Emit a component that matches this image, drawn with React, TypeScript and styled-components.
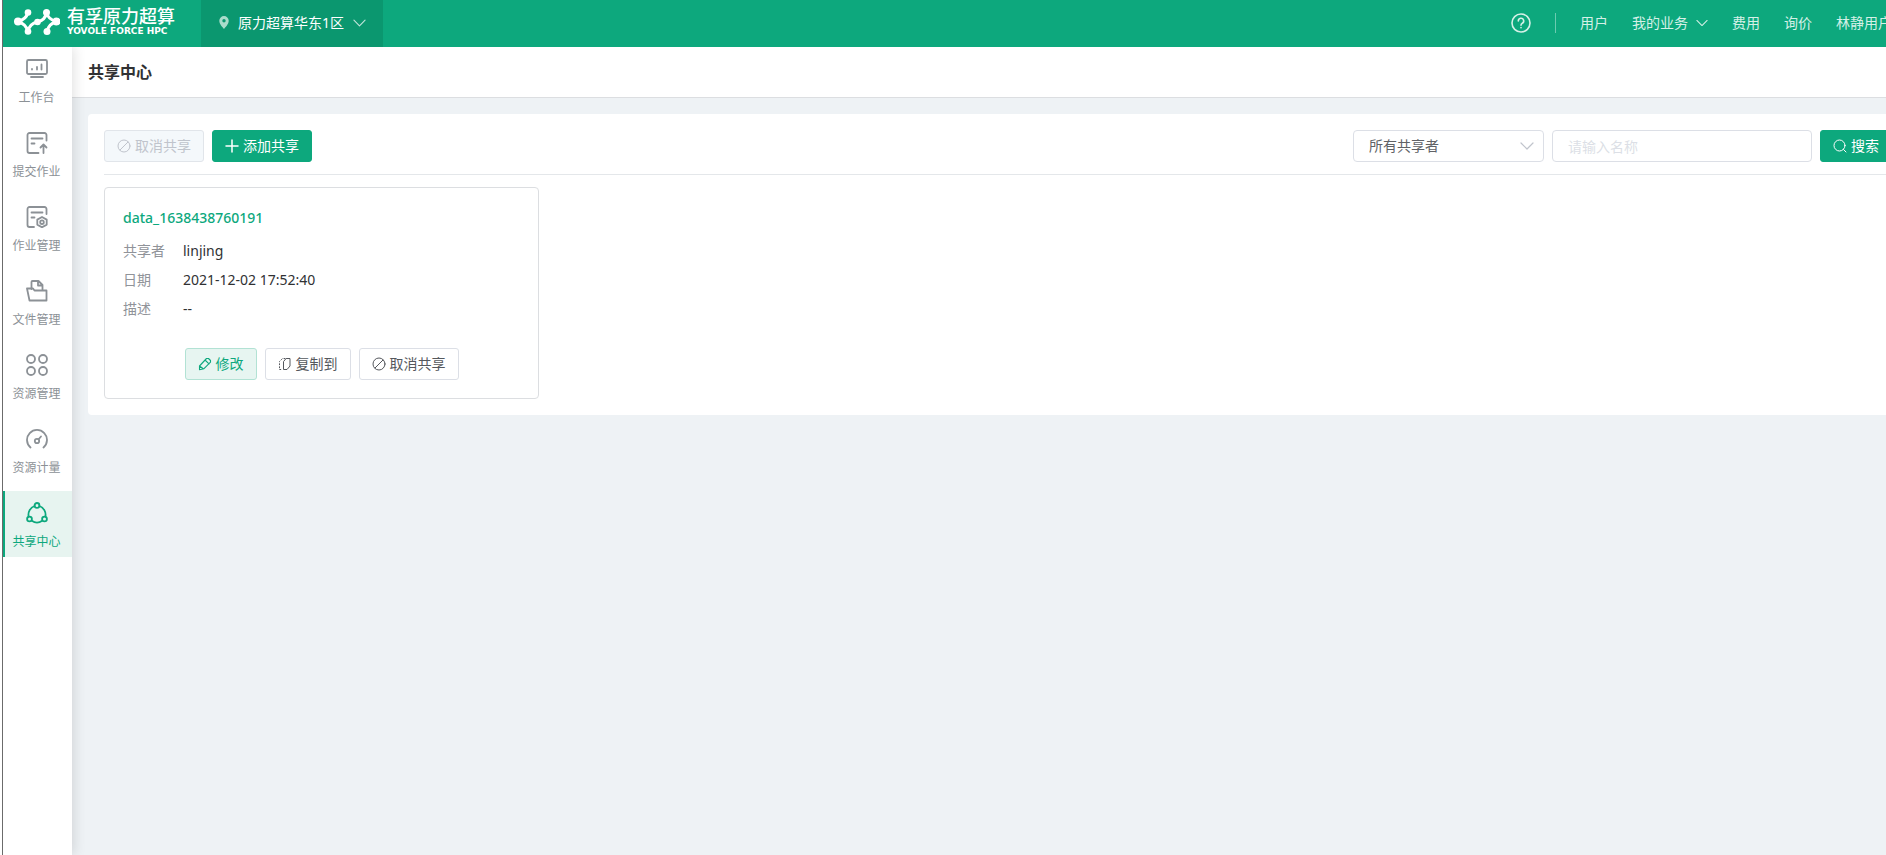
import React from 'react';
import styled, { createGlobalStyle, css } from 'styled-components';

const GlobalStyle = createGlobalStyle`
  *, *::before, *::after { box-sizing: border-box; }
  html, body, #root { height: 100%; }
  body {
    margin: 0;
    overflow: hidden;
    background: #fff;
    color: #303133;
    font-family: "Noto Sans", "Noto Sans CJK SC", sans-serif;
    font-size: 14px;
    line-height: 20px;
  }
  button, input, select { font: inherit; }
  a { color: inherit; text-decoration: none; }
  svg { display: block; flex: none; }
`;

const green = '#0da87d';
const line = '#dcdfe6';

/* The console is a little wider than the window, its right edge runs out of view. */
const Page = styled.div`
  display: flex;
  flex-direction: column;
  width: calc(100% + 36px);
  min-height: 100vh;
  margin-left: 2px;
  border-left: 1px solid #6b6b6b;
`;

const Header = styled.header`
  display: flex;
  align-items: stretch;
  height: 47px;
  background: ${green};
  color: #fff;
`;

const Brand = styled.a`
  display: flex;
  align-items: center;
  gap: 7px;
  width: 198px;
  padding: 0 0 3px 11px;
`;

const BrandText = styled.span`
  display: flex;
  flex-direction: column;
`;

const BrandName = styled.span`
  font-size: 18px;
  line-height: 18px;
  font-weight: 500;
`;

const BrandSub = styled.span`
  font-family: "DejaVu Sans", sans-serif;
  font-size: 9px;
  line-height: 12px;
  font-weight: 700;
  white-space: nowrap;
`;

const Region = styled.button`
  display: flex;
  align-items: center;
  gap: 9px;
  padding: 0 17px 2px 18px;
  border: 0;
  background: #0b976f;
  color: #fff;
  line-height: 20px;
  & > svg:last-child { opacity: 0.75; }
`;

const Nav = styled.nav`
  display: flex;
  align-items: center;
  gap: 24px;
  margin-left: auto;
  padding: 0 12px 2px 0;
  color: #d5f0e7;
`;

const NavLink = styled.a`
  display: flex;
  align-items: center;
  gap: 8px;
  white-space: nowrap;
`;

const NavDivider = styled.span`
  width: 1px;
  height: 20px;
  background: #6ccbb0;
`;

const Body = styled.div`
  display: flex;
  flex: 1;
`;

const Sidebar = styled.nav`
  display: flex;
  flex-direction: column;
  gap: 8px;
  width: 69px;
  flex: none;
  background: #fff;
  box-shadow: 2px 0 12px rgba(0, 0, 0, 0.12);
  clip-path: inset(0 -16px 0 0);
  z-index: 1;
`;

const SideItem = styled.a<{ $active?: boolean }>`
  display: flex;
  flex-direction: column;
  align-items: center;
  gap: 8px;
  height: 66px;
  padding: 11px 4px 0 0;
  border-left: 2px solid transparent;
  color: #8c9196;
  font-size: 12px;
  line-height: 20px;
  ${(p) =>
    p.$active &&
    css`
      border-left-color: ${green};
      background: #e7f4f0;
      color: ${green};
    `}
`;

const Main = styled.main`
  flex: 1;
  background: #eef2f5;
`;

const TitleBar = styled.div`
  display: flex;
  align-items: center;
  height: 51px;
  padding: 0 16px;
  border-bottom: 1px solid #dcdee1;
  background: #fff;
`;

const Title = styled.h1`
  margin: 0;
  font-size: 16px;
  line-height: 24px;
  font-weight: 600;
`;

const Panel = styled.section`
  margin: 16px;
  padding: 16px;
  border-radius: 4px;
  background: #fff;
`;

const Toolbar = styled.div`
  display: flex;
  gap: 8px;
  padding-bottom: 12px;
  border-bottom: 1px solid #e4e7ea;
`;

const Filters = styled.form`
  display: flex;
  gap: 8px;
  margin-left: auto;
`;

type Tone = 'plain' | 'primary' | 'soft';

const tones = {
  plain: css`
    border-color: ${line};
    background: #fff;
    color: #55585d;
  `,
  primary: css`
    border-color: ${green};
    background: ${green};
    color: #fff;
  `,
  soft: css`
    border-color: #b2e2d4;
    background: #e7f5f1;
    color: ${green};
  `,
};

const Button = styled.button<{ $tone?: Tone }>`
  display: flex;
  align-items: center;
  justify-content: center;
  gap: 4px;
  height: 32px;
  padding: 0 12px;
  border: 1px solid;
  border-radius: 3px;
  white-space: nowrap;
  ${(p) => tones[p.$tone ?? 'plain']}
  &:disabled {
    border-color: #e1e5ea;
    background: #f4f8fb;
    color: #c0c4cc;
  }
`;

const SelectBox = styled.label`
  display: grid;
  align-items: center;
  width: 191px;
  & > * { grid-area: 1 / 1; }
  & > svg { justify-self: end; margin-right: 10px; pointer-events: none; color: #c0c4cc; }
`;

const Select = styled.select`
  appearance: none;
  width: 100%;
  height: 32px;
  padding: 0 30px 0 15px;
  border: 1px solid ${line};
  border-radius: 4px;
  background: #fff;
  color: #606266;
`;

const Input = styled.input`
  width: 260px;
  height: 32px;
  padding: 0 15px;
  border: 1px solid ${line};
  border-radius: 4px;
  color: #606266;
  &::placeholder { color: #dcdfe6; opacity: 1; }
`;

const Cards = styled.div`
  display: grid;
  grid-template-columns: repeat(auto-fill, 435px);
  gap: 16px;
  padding-top: 12px;
`;

const Card = styled.article`
  padding: 18px;
  border: 1px solid #dcdee1;
  border-radius: 4px;
`;

const CardTitle = styled.h2`
  margin: 0 0 6px;
  font-size: 14px;
  line-height: 24px;
  font-weight: 500;
  color: ${green};
`;

const Fields = styled.dl`
  display: grid;
  grid-template-columns: 60px 1fr;
  margin: 0 0 25px;
  line-height: 29px;
`;

const Label = styled.dt`
  color: #909399;
`;

const Value = styled.dd`
  margin: 0;
`;

const Actions = styled.div`
  display: flex;
  justify-content: center;
  gap: 8px;
`;

type IconProps = { w: number; h?: number; box?: string; sw?: number; children: React.ReactNode };

const Icon = ({ w, h = w, box, sw = 1, children }: IconProps) => (
  <svg
    width={w}
    height={h}
    viewBox={box ?? `0 0 ${w} ${h}`}
    fill="none"
    stroke="currentColor"
    strokeWidth={sw}
    strokeLinecap="round"
    strokeLinejoin="round"
    aria-hidden="true"
  >
    {children}
  </svg>
);

const Chevron = ({ w }: { w: number }) => (
  <Icon w={w} h={8} box="0 0 14 8" sw={1.2}>
    <path d="M1 1l6 6 6-6" />
  </Icon>
);

const Logo = () => (
  <svg width="46" height="28" viewBox="0 0 46 28" fill="#fff" stroke="#fff" aria-hidden="true">
    <circle cx="14" cy="4.500" r="3.300" stroke="none" />
    <circle cx="4" cy="13.500" r="4" stroke="none" />
    <circle cx="14" cy="23.500" r="3.300" stroke="none" />
    <circle cx="32.500" cy="4.500" r="3.500" stroke="none" />
    <circle cx="42.500" cy="13.500" r="4" stroke="none" />
    <circle cx="33" cy="23.500" r="3.500" stroke="none" />
    <circle cx="23.500" cy="14" r="3.300" stroke="none" />
    <path
      d="M14 4.500Q12 11.500 4 13.500Q12 16 14 23.500M32.500 4.500Q34 11.500 42.500 13.500Q34.500 16 33 23.500M14 23.500Q15.500 15.500 23.500 14Q31.500 12 32.500 4.500"
      fill="none"
      strokeWidth="3"
    />
  </svg>
);

const Ban = () => (
  <Icon w={14}>
    <circle cx="7" cy="7" r="6" />
    <path d="M3 11l8-8" />
  </Icon>
);

const sideItems = [
  {
    label: '工作台',
    icon: (
      <>
        <rect x="1" y="2" width="20" height="14" rx="1.500" />
        <path d="M5 19h12M6 11v.500M11 9v2.500M15.500 6.500v5" />
      </>
    ),
  },
  {
    label: '提交作业',
    icon: (
      <path d="M20.500 8.500V3a2 2 0 0 0-2-2h-15a2 2 0 0 0-2 2v16a2 2 0 0 0 2 2h9M5.500 6.500h11M5.500 11.500h3M17.500 21v-8M14.500 15.500l3-3 3 3" />
    ),
  },
  {
    label: '作业管理',
    icon: (
      <>
        <path d="M20.500 8V3a2 2 0 0 0-2-2h-15a2 2 0 0 0-2 2v16a2 2 0 0 0 2 2H8M5.500 6.500h11M5.500 11.500h3" />
        <path d="M16 11l4.700 2.600v5L16 21.300l-4.700-2.700v-5z" />
        <circle cx="16" cy="16.200" r="1.800" />
      </>
    ),
  },
  {
    label: '文件管理',
    icon: (
      <>
        <path d="M5.500 9V2a1 1 0 0 1 1-1h6l4 4v4.500M12 1v4.500h4.500" />
        <path d="M3.500 20.500L1 8.500h6l1.500 2h12v10z" />
      </>
    ),
  },
  {
    label: '资源管理',
    icon: (
      <>
        <circle cx="5" cy="5" r="4" />
        <circle cx="17" cy="5" r="4" />
        <circle cx="5" cy="17" r="4" />
        <circle cx="17" cy="17" r="4" />
      </>
    ),
  },
  {
    label: '资源计量',
    icon: (
      <>
        <path d="M4.500 19.500a10 10 0 1 1 13 0" />
        <circle cx="11" cy="13" r="2.200" />
        <path d="M12.500 11.300L15 8.500" />
      </>
    ),
  },
  {
    label: '共享中心',
    active: true,
    icon: (
      <>
        <circle cx="11" cy="3.400" r="2.400" />
        <circle cx="3.500" cy="17" r="2.400" />
        <circle cx="18.500" cy="17" r="2.400" />
        <path d="M8.600 4A9.300 9.300 0 0 0 2.600 14.500M13.400 4a9.300 9.300 0 0 1 6 10.500M5.800 18.800a9.300 9.300 0 0 0 10.400 0" />
      </>
    ),
  },
];

const fields = [
  ['共享者', 'linjing'],
  ['日期', '2021-12-02 17:52:40'],
  ['描述', '--'],
];

export default function App() {
  return (
    <>
      <GlobalStyle />
      <Page>
        <Header>
          <Brand href="#">
            <Logo />
            <BrandText>
              <BrandName>有孚原力超算</BrandName>
              <BrandSub>YOVOLE FORCE HPC</BrandSub>
            </BrandText>
          </Brand>
          <Region type="button">
            <svg width="10" height="13" viewBox="0 0 10 13" fill="#a9dccb" aria-hidden="true">
              <path
                fillRule="evenodd"
                d="M5 0a4.700 4.700 0 0 1 4.700 4.700C9.700 8 6.500 11 5 13C3.500 11 .3 8 .3 4.700A4.700 4.700 0 0 1 5 0zM5 3a1.700 1.700 0 1 0 0 3.400A1.700 1.700 0 0 0 5 3z"
              />
            </svg>
            原力超算华东1区
            <Chevron w={13} />
          </Region>
          <Nav>
            <NavLink href="#" aria-label="帮助">
              <Icon w={20} sw={1.6}>
                <circle cx="10" cy="10" r="9" />
                <path d="M7.300 8a2.700 2.700 0 1 1 4 2.300c-.9.500-1.300.9-1.300 1.900M10 14.600v.1" />
              </Icon>
            </NavLink>
            <NavDivider />
            <NavLink href="#">用户</NavLink>
            <NavLink href="#">
              我的业务
              <Chevron w={12} />
            </NavLink>
            <NavLink href="#">费用</NavLink>
            <NavLink href="#">询价</NavLink>
            <NavLink href="#">
              林静用户
              <Chevron w={12} />
            </NavLink>
          </Nav>
        </Header>
        <Body>
          <Sidebar>
            {sideItems.map((item) => (
              <SideItem key={item.label} href="#" $active={item.active}>
                <Icon w={22} sw={1.8}>
                  {item.icon}
                </Icon>
                {item.label}
              </SideItem>
            ))}
          </Sidebar>
          <Main>
            <TitleBar>
              <Title>共享中心</Title>
            </TitleBar>
            <Panel>
              <Toolbar>
                <Button type="button" disabled>
                  <Ban />
                  取消共享
                </Button>
                <Button type="button" $tone="primary">
                  <Icon w={14} sw={1.5}>
                    <path d="M7 1v12M1 7h12" />
                  </Icon>
                  添加共享
                </Button>
                <Filters>
                  <SelectBox>
                    <Select aria-label="共享者">
                      <option>所有共享者</option>
                    </Select>
                    <Chevron w={14} />
                  </SelectBox>
                  <Input type="text" aria-label="名称" placeholder="请输入名称" />
                  <Button type="button" $tone="primary">
                    <Icon w={14}>
                      <circle cx="6.500" cy="6.500" r="5.500" />
                      <path d="M10.500 10.500l2.500 2.500" />
                    </Icon>
                    搜索
                  </Button>
                </Filters>
              </Toolbar>
              <Cards>
                <Card>
                  <CardTitle>data_1638438760191</CardTitle>
                  <Fields>
                    {fields.map(([label, value]) => (
                      <React.Fragment key={label}>
                        <Label>{label}</Label>
                        <Value>{value}</Value>
                      </React.Fragment>
                    ))}
                  </Fields>
                  <Actions>
                    <Button type="button" $tone="soft">
                      <Icon w={14} sw={1.1}>
                        <path d="M8.500 1.500h2l2 2v1.700l-6.500 6.500-4.500 1V9zM7 3l4 3.800M1.800 9.200l3.500 2.600" />
                      </Icon>
                      修改
                    </Button>
                    <Button type="button">
                      <Icon w={14}>
                        <path d="M8.500 1.500H12v7.500l-3 3.500H5.500V5z" />
                        <path d="M7 1.500H4.500L1.500 4.500v8h2" strokeDasharray="1 2" />
                      </Icon>
                      复制到
                    </Button>
                    <Button type="button">
                      <Ban />
                      取消共享
                    </Button>
                  </Actions>
                </Card>
              </Cards>
            </Panel>
          </Main>
        </Body>
      </Page>
    </>
  );
}
